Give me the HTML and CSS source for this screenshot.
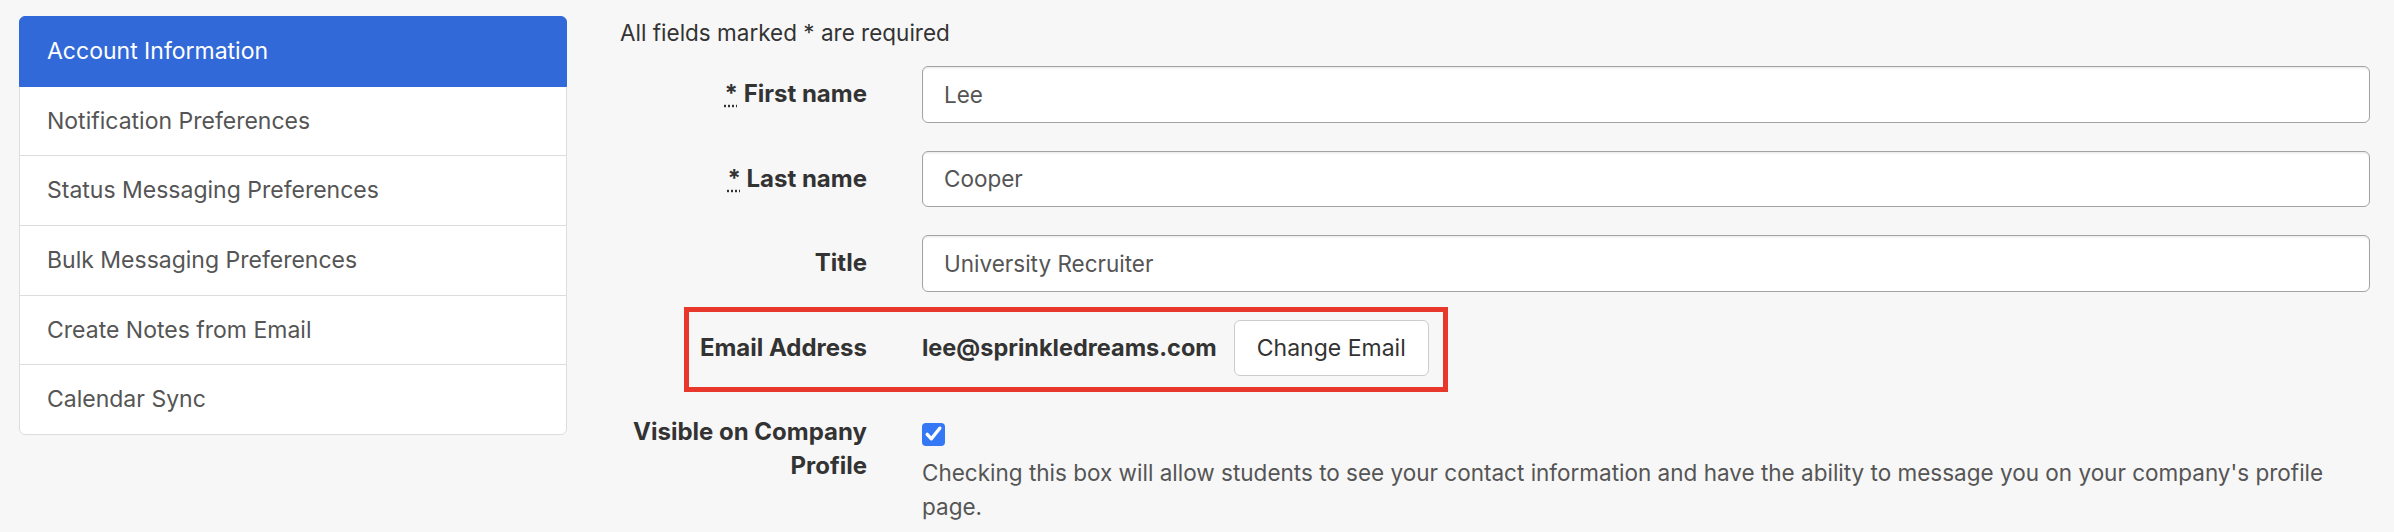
FILE: index.html
```html
<!DOCTYPE html>
<html lang="en">
<head>
<meta charset="utf-8">
<title>Account Information</title>
<link rel="stylesheet" href="styles.css">
</head>
<body>
<div class="page">
  <nav class="sidebar">
    <a class="nav-item active" href="#">Account Information</a>
    <a class="nav-item" href="#">Notification Preferences</a>
    <a class="nav-item" href="#">Status Messaging Preferences</a>
    <a class="nav-item" href="#">Bulk Messaging Preferences</a>
    <a class="nav-item" href="#">Create Notes from Email</a>
    <a class="nav-item" href="#">Calendar Sync</a>
  </nav>
  <main class="main">
    <p class="required-note">All fields marked * are required</p>
    <form class="form">
      <div class="form-row">
        <label class="form-label" for="first"><abbr class="req" title="required">*</abbr> First name</label>
        <input class="form-input" id="first" type="text" value="Lee">
      </div>
      <div class="form-row">
        <label class="form-label" for="last"><abbr class="req" title="required">*</abbr> Last name</label>
        <input class="form-input" id="last" type="text" value="Cooper">
      </div>
      <div class="form-row">
        <label class="form-label" for="title">Title</label>
        <input class="form-input" id="title" type="text" value="University Recruiter">
      </div>
      <div class="form-row email-row">
        <span class="form-label">Email Address</span>
        <div class="email-control">
          <span class="email-value">lee@sprinkledreams.com</span>
          <button class="btn" type="button">Change Email</button>
        </div>
        <div class="highlight"></div>
      </div>
      <div class="form-row visible-row">
        <label class="form-label multi" for="visible">Visible on Company Profile</label>
        <div class="visible-control">
          <span class="checkbox" id="visible" role="checkbox" aria-checked="true">
            <svg width="23" height="23" viewBox="0 0 23 23" aria-hidden="true">
              <rect x="0" y="0" width="23" height="23" rx="4" fill="#3478f6"/>
              <path d="M5.2 11.4 L9.4 15.8 L17.8 5.2" fill="none" stroke="#ffffff" stroke-width="3.4" stroke-linecap="round" stroke-linejoin="round"/>
            </svg>
          </span>
          <p class="help-text">Checking this box will allow students to see your contact information and have the ability to message you on your company's profile page.</p>
        </div>
      </div>
    </form>
  </main>
</div>
</body>
</html>
```

FILE: styles.css
```css
* {
  box-sizing: border-box;
}

html,
body {
  margin: 0;
  padding: 0;
  background: #f7f7f7;
}

body {
  font-family: "Inter", "Noto Sans", sans-serif;
  color: #333333;
  width: 2394px;
  height: 532px;
  overflow: hidden;
}

.page {
  display: flex;
  align-items: flex-start;
  gap: 53px;
  padding: 16px 24px 0 19px;
}

/* Sidebar */
.sidebar {
  flex: none;
  width: 548px;
  display: flex;
  flex-direction: column;
}

.nav-item {
  position: relative;
  display: block;
  padding: 16px 27px;
  line-height: 36.67px;
  font-size: 23px;
  color: #555555;
  text-decoration: none;
  background: #ffffff;
  border: 1px solid #dddddd;
  margin-bottom: -1px;
}

.nav-item:first-child {
  border-top-left-radius: 6px;
  border-top-right-radius: 6px;
}

.nav-item:last-child {
  margin-bottom: 0;
  border-bottom-left-radius: 6px;
  border-bottom-right-radius: 6px;
}

.nav-item.active {
  z-index: 1;
  color: #ffffff;
  background: #3269d8;
  border-color: #3269d8;
}

/* Main */
.main {
  flex: 1;
  min-width: 0;
}

.required-note {
  margin: 0;
  font-size: 22.5px;
  line-height: 33px;
  color: #333333;
}

.form {
  margin-top: 17px;
  display: flex;
  flex-direction: column;
}

.form-row {
  position: relative;
  display: grid;
  grid-template-columns: 247px 1fr;
  column-gap: 55px;
  align-items: center;
  margin-bottom: 28px;
}

.form-label {
  text-align: right;
  font-weight: 700;
  font-size: 24px;
  line-height: 34px;
  color: #333333;
}

.req {
  text-decoration: underline dotted;
  text-underline-offset: 3px;
  cursor: help;
}

.form-input {
  width: 100%;
  height: 56.6px;
  padding: 0 21px;
  font-family: inherit;
  font-size: 22.5px;
  color: #555555;
  background: #ffffff;
  border: 1px solid #a3a3a3;
  border-radius: 6px;
  box-shadow: inset 0 1.5px 1.5px rgba(0, 0, 0, 0.075);
  outline: none;
}

/* Email row */
.email-row {
  margin-bottom: 38.5px;
}

.email-control {
  display: flex;
  align-items: center;
  gap: 17px;
}

.email-value {
  font-weight: 700;
  font-size: 23.5px;
  color: #333333;
}

.btn {
  height: 56.4px;
  padding: 0 22px;
  font-family: inherit;
  font-size: 23px;
  color: #333333;
  background: #ffffff;
  border: 1px solid #cccccc;
  border-radius: 6px;
}

.highlight {
  position: absolute;
  top: -13px;
  left: 64px;
  width: 764px;
  height: 85px;
  border: 5.5px solid #e8372b;
  pointer-events: none;
}

/* Visible row */
.visible-row {
  align-items: start;
}

.visible-control {
  display: flex;
  flex-direction: column;
}

.checkbox {
  display: block;
  width: 23px;
  height: 23px;
  margin-top: 8px;
  margin-bottom: 10px;
}

.checkbox svg {
  display: block;
}

.help-text {
  margin: 0;
  max-width: 1425px;
  font-size: 22.5px;
  line-height: 34px;
  color: #555555;
}
```
